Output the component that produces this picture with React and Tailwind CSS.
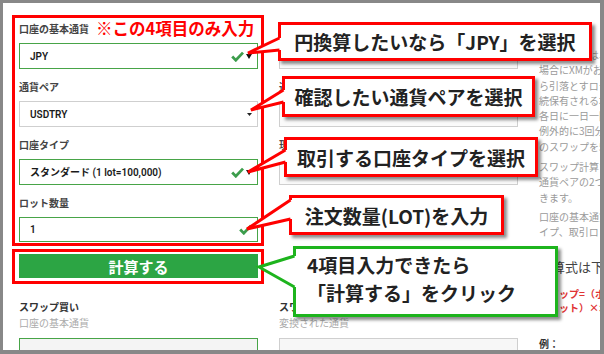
import React from 'react'

const Check = () => (
  <svg width="13" height="11" viewBox="0 0 13 11" className="shrink-0">
    <path d="M1.2 5.6 L4.8 9.2 L12 1.6" fill="none" stroke="#3c9d4c" strokeWidth="2.8" />
  </svg>
)

const Caret = ({ small }) =>
  small ? (
    <svg width="5" height="3" viewBox="0 0 5 3" className="shrink-0">
      <polygon points="0,0 5,0 2.5,3" fill="#222" />
    </svg>
  ) : (
    <svg width="6" height="5" viewBox="0 0 6 5" className="shrink-0">
      <polygon points="0,0 6,0 3,5" fill="#111" />
    </svg>
  )

const LEFT_FIELDS = [
  { label: '口座の基本通貨', value: 'JPY', ok: true, caret: 'big', note: true },
  { label: '通貨ペア', value: 'USDTRY', ok: false, caret: 'small' },
  { label: '口座タイプ', value: 'スタンダード (1 lot=100,000)', ok: true, caret: 'big' },
  { label: 'ロット数量', value: '1', ok: true, caret: null },
]

const MID_FIELDS = ['変換された通貨', '通貨ペアの価格', '現在の価格']

const RIGHT_TEXT = [
  'スワップとは、ポジションを翌日に持ち越した',
  '場合にXMがお客様の口座に支払う、または口座か',
  'ら引落とすロールオーバー金利のことです。',
  '続保有される場合、スワップは毎営業日に発生し',
  '各日に一日一回計算されます。水曜日は',
  '例外的に3回分の金額が付与され、週末分',
  'のスワップを5営業日で調整します。',
]

const CALLOUT = 'absolute z-10 bg-white border-[3px] shadow-[3px_3px_3px_rgba(0,0,0,0.45)] text-[19px] font-bold text-[#222] whitespace-nowrap'

export default function App() {
  return (
    <div className="relative w-[604px] h-[354px] overflow-hidden bg-white [font-family:'Noto_Sans_CJK_JP',sans-serif]">
      <div className="flex pl-[12px]">
        {/* form area */}
        <div className="flex flex-col w-[506px] shrink-0 pt-[15px]">
          <div className="flex">
            <div className="w-[252px] shrink-0">
              <div className="border-[3px] border-[#ff0000] pl-[4px] pr-[3px] pb-[1px]">
                {LEFT_FIELDS.map((f, i) => (
                  <div key={f.label} className={i ? 'mt-[7px]' : ''}>
                    <div className="h-[20px] flex items-center gap-[7px] whitespace-nowrap">
                      <span className="shrink-0 text-[10px] font-bold text-[#444]">{f.label}</span>
                      {f.note && (
                        <span className="shrink-0 text-[16.5px] font-bold text-[#ff0000] leading-none">※この4項目のみ入力</span>
                      )}
                    </div>
                    <div
                      className={`mt-[5px] flex items-center pl-[10px] pr-[5px] border ${
                        f.ok ? 'border-[#47a447]' : 'border-[#cfcfcf]'
                      } ${i === 3 ? 'h-[25px]' : 'h-[26px]'}`}
                    >
                      <span className="text-[10px] font-semibold text-[#1a1a1a] whitespace-nowrap [font-family:Roboto,'Noto_Sans_CJK_JP',sans-serif]">
                        {f.value}
                      </span>
                      <div className="ml-auto flex items-center gap-[2px]">
                        {f.ok && <Check />}
                        {f.caret === 'big' && <Caret />}
                        {f.caret === 'small' && <Caret small />}
                      </div>
                    </div>
                  </div>
                ))}
              </div>
              <div className="mt-[3px] border-[3px] border-[#ff0000] pl-[4px] pr-[3px] pt-[2px] pb-[3px]">
                <button className="w-full h-[24px] bg-[#2ca544] text-white text-[15px] font-bold leading-none flex items-center justify-center">
                  計算する
                </button>
              </div>
            </div>

            <div className="ml-[15px] w-[239px] shrink-0 pt-[3px]">
              {MID_FIELDS.map((label, i) => (
                <div key={label} className={i ? 'mt-[7px]' : ''}>
                  <div className="h-[20px] flex items-center">
                    <span className="text-[10px] font-bold text-[#444]">{label}</span>
                  </div>
                  <div className="mt-[5px] h-[26px] border border-[#cfcfcf] bg-[#fafafa]" />
                </div>
              ))}
            </div>
          </div>

          <div className="flex mt-[15px]">
            <div className="w-[252px] shrink-0 pl-[7px] pr-[6px]">
              <div className="h-[16px] leading-[16px] text-[10px] font-bold text-[#333]">スワップ買い</div>
              <div className="h-[16px] leading-[16px] text-[10px] text-[#aaa]">口座の基本通貨</div>
              <div className="mt-[7px] h-[30px] border border-[#47a447] bg-[#f4f4f4]" />
            </div>
            <div className="ml-[15px] w-[239px] shrink-0">
              <div className="h-[16px] leading-[16px] text-[10px] font-bold text-[#333]">スワップ売り</div>
              <div className="h-[16px] leading-[16px] text-[10px] text-[#aaa]">変換された通貨</div>
              <div className="mt-[7px] h-[30px] border border-[#cfcfcf] bg-[#f7f7f7]" />
            </div>
          </div>
        </div>

        {/* description text */}
        <div className="ml-[21px] w-[240px] shrink-0 pt-[47px] text-[10px] leading-[15.3px] text-[#9a9a9a] whitespace-nowrap">
          {RIGHT_TEXT.map((t) => (
            <div key={t}>{t}</div>
          ))}
          <div className="mt-[5px]">スワップ計算ツールでは、</div>
          <div>通貨ペアの2つの通貨の金利差を確認で</div>
          <div>きます。</div>
          <div className="mt-[4px]">口座の基本通貨、通貨ペア、口座タ</div>
          <div>イプ、取引ロット数を入力してください。</div>
          <div className="mt-[18px] text-[13px] leading-[18px] text-[#444]">計算式は下記の通りです。</div>
          <div className="mt-[11px] leading-[14px] font-bold text-[#e03434]">スワップ=（ポイント×契約サイズ</div>
          <div className="leading-[14px] font-bold text-[#e03434]">（ロット）×ポイント値</div>
          <div className="mt-[22px] leading-[14px] font-bold text-[#333]">例：</div>
        </div>
      </div>

      {/* callouts */}
      <div className={`${CALLOUT} leading-none border-[#ff0000] left-[278px] top-[22px] w-[314px] h-[39px] flex items-center justify-center`}>
        円換算したいなら「JPY」を選択
      </div>
      <div className={`${CALLOUT} leading-none border-[#ff0000] left-[282px] top-[76px] w-[253px] h-[41px] flex items-center justify-center`}>
        確認したい通貨ペアを選択
      </div>
      <div className={`${CALLOUT} leading-none border-[#ff0000] left-[284px] top-[137px] w-[254px] h-[40px] flex items-center justify-center`}>
        取引する口座タイプを選択
      </div>
      <div className={`${CALLOUT} leading-none border-[#ff0000] left-[289px] top-[195px] w-[215px] h-[40px] flex items-center justify-center`}>
        注文数量(LOT)を入力
      </div>
      <div className={`${CALLOUT} leading-[28px] border-[#1db41d] left-[293px] top-[246px] w-[265px] h-[71px] pl-[11px] pt-[2px]`}>
        <div>4項目入力できたら</div>
        <div>「計算する」をクリック</div>
      </div>

      <svg className="absolute left-0 top-0 z-20 pointer-events-none" width="604" height="354" viewBox="0 0 604 354">
        {[
          { tip: [248, 53], x: 278, y1: 38, y2: 50, c: '#ff0000' },
          { tip: [251, 110], x: 282, y1: 90, y2: 102, c: '#ff0000' },
          { tip: [248, 172], x: 284, y1: 150, y2: 162, c: '#ff0000' },
          { tip: [247, 229], x: 289, y1: 200, y2: 219, c: '#ff0000' },
          { tip: [259, 267], x: 293, y1: 256, y2: 287, c: '#1db41d' },
        ].map(({ tip, x, y1, y2, c }, i) => (
          <g key={i}>
            <polygon
              points={`${tip[0]},${tip[1]} ${x + 1.5},${y1} ${x + 3.5},${y1} ${x + 3.5},${y2} ${x + 1.5},${y2}`}
              fill="#fff"
            />
            <polyline
              points={`${x + 1.5},${y1} ${tip[0]},${tip[1]} ${x + 1.5},${y2}`}
              fill="none"
              stroke={c}
              strokeWidth="3"
              strokeLinejoin="miter"
            />
          </g>
        ))}
      </svg>

      <div className="absolute inset-0 z-30 pointer-events-none border-t-[3px] border-l-[3px] border-r-[4px] border-b-[4px] border-[#888]" />
    </div>
  )
}
